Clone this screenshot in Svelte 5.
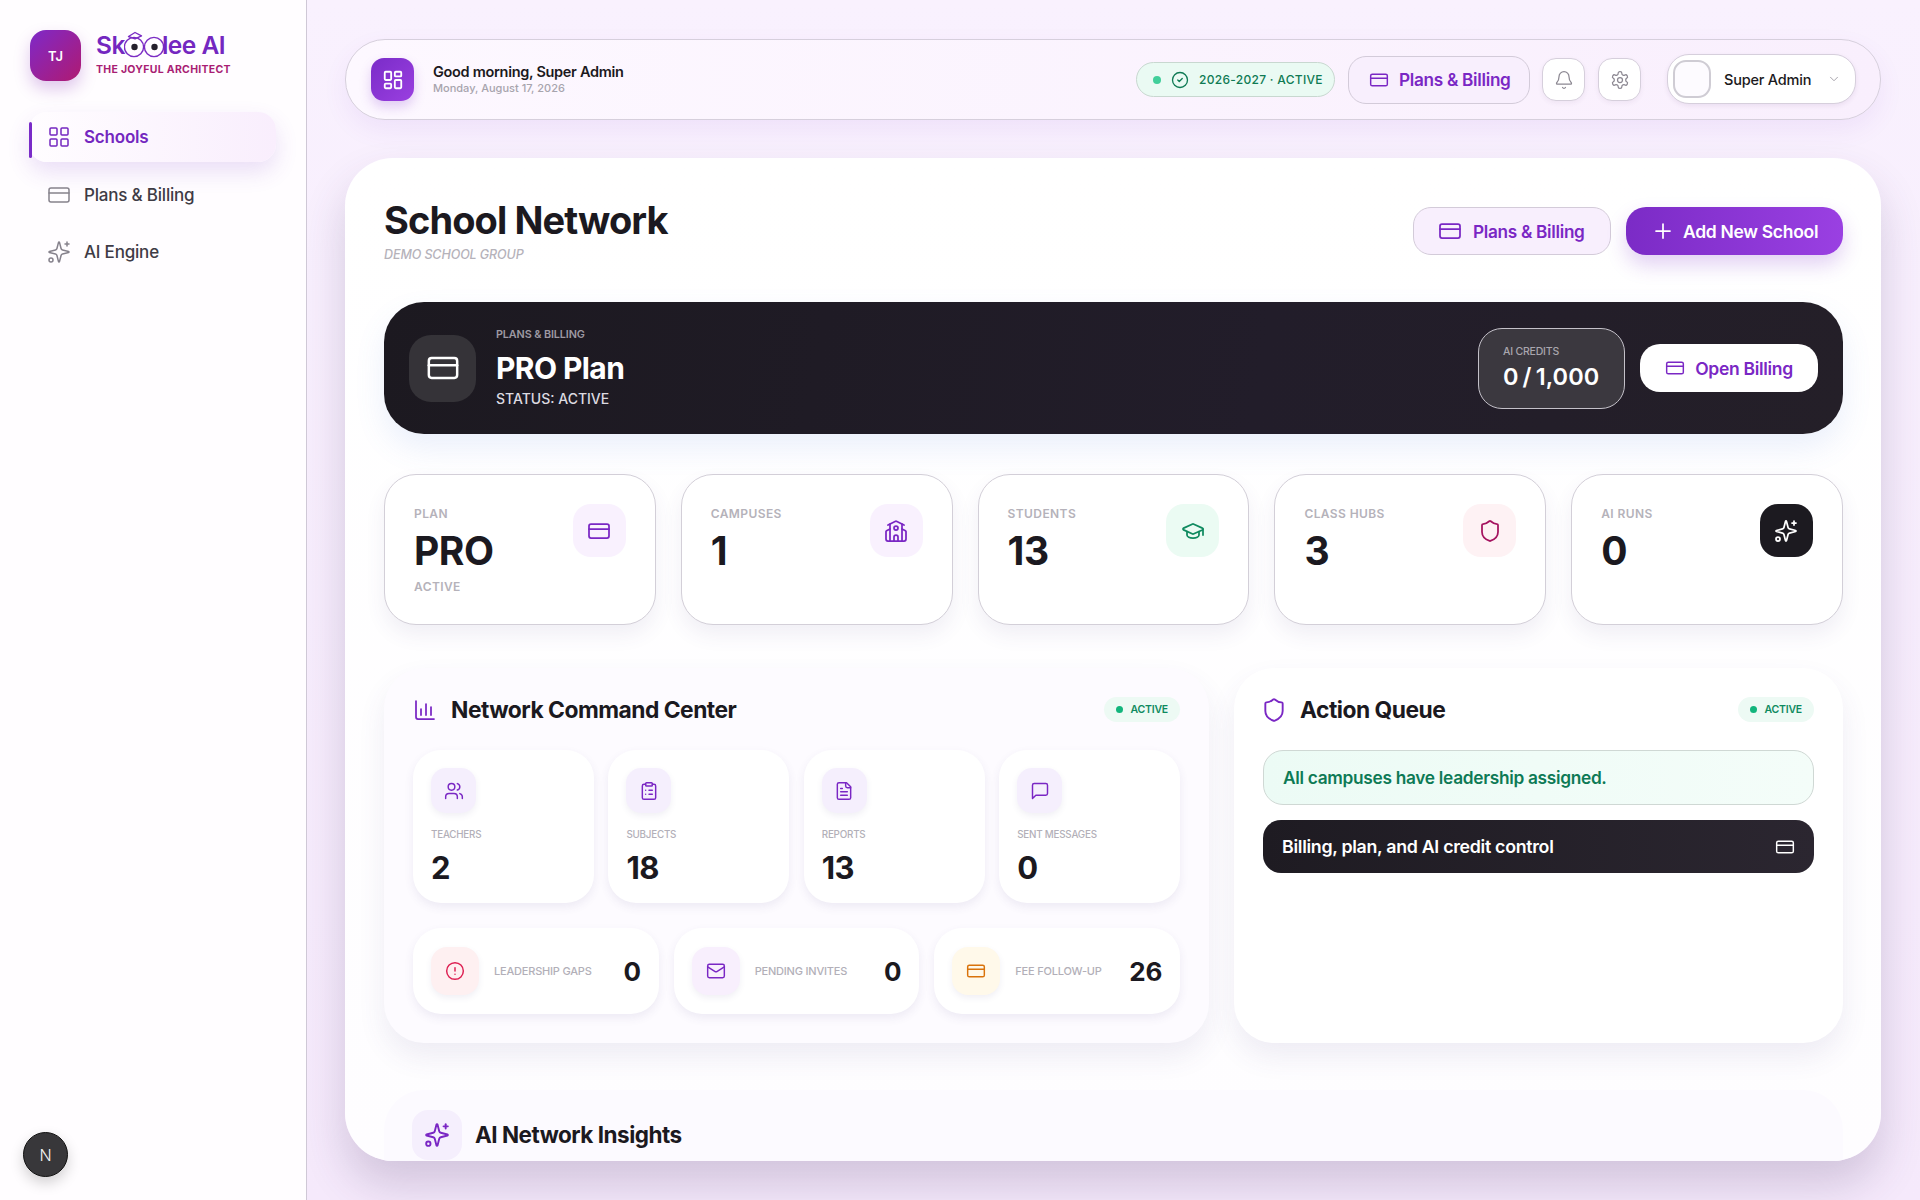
<script>
  const paths = {
    grid: '<rect x="3" y="3" width="7" height="7" rx="1"/><rect x="14" y="3" width="7" height="7" rx="1"/><rect x="14" y="14" width="7" height="7" rx="1"/><rect x="3" y="14" width="7" height="7" rx="1"/>',
    dashboard: '<rect x="3" y="3" width="7" height="9" rx="1"/><rect x="14" y="3" width="7" height="5" rx="1"/><rect x="14" y="12" width="7" height="9" rx="1"/><rect x="3" y="16" width="7" height="5" rx="1"/>',
    card: '<rect x="2" y="5" width="20" height="14" rx="2"/><line x1="2" y1="10" x2="22" y2="10"/>',
    sparkles: '<path d="M9.937 15.5A2 2 0 0 0 8.5 14.063l-6.135-1.582a.5.5 0 0 1 0-.962L8.5 9.936A2 2 0 0 0 9.937 8.5l1.582-6.135a.5.5 0 0 1 .963 0L14.063 8.5A2 2 0 0 0 15.5 9.937l6.135 1.581a.5.5 0 0 1 0 .964L15.5 14.063a2 2 0 0 0-1.437 1.437l-1.582 6.135a.5.5 0 0 1-.963 0z"/><path d="M20 2v4"/><path d="M22 4h-4"/><circle cx="4" cy="20" r="2"/>',
    check: '<circle cx="12" cy="12" r="10"/><path d="m9 12 2 2 4-4"/>',
    bell: '<path d="M10.268 21a2 2 0 0 0 3.464 0"/><path d="M3.262 15.326A1 1 0 0 0 4 17h16a1 1 0 0 0 .74-1.673C19.41 13.956 18 12.499 18 8A6 6 0 0 0 6 8c0 4.499-1.411 5.956-2.738 7.326"/>',
    settings: '<path d="M12.22 2h-.44a2 2 0 0 0-2 2v.18a2 2 0 0 1-1 1.73l-.43.25a2 2 0 0 1-2 0l-.15-.08a2 2 0 0 0-2.73.73l-.22.38a2 2 0 0 0 .73 2.73l.15.1a2 2 0 0 1 1 1.72v.51a2 2 0 0 1-1 1.74l-.15.09a2 2 0 0 0-.73 2.73l.22.38a2 2 0 0 0 2.73.73l.15-.08a2 2 0 0 1 2 0l.43.25a2 2 0 0 1 1 1.73V20a2 2 0 0 0 2 2h.44a2 2 0 0 0 2-2v-.18a2 2 0 0 1 1-1.73l.43-.25a2 2 0 0 1 2 0l.15.08a2 2 0 0 0 2.73-.73l.22-.39a2 2 0 0 0-.73-2.73l-.15-.08a2 2 0 0 1-1-1.74v-.5a2 2 0 0 1 1-1.74l.15-.09a2 2 0 0 0 .73-2.73l-.22-.38a2 2 0 0 0-2.73-.73l-.15.08a2 2 0 0 1-2 0l-.43-.25a2 2 0 0 1-1-1.73V4a2 2 0 0 0-2-2z"/><circle cx="12" cy="12" r="3"/>',
    chevron: '<path d="m6 9 6 6 6-6"/>',
    plus: '<path d="M5 12h14"/><path d="M12 5v14"/>',
    school: '<path d="M14 22v-4a2 2 0 1 0-4 0v4"/><path d="m18 10 3.447 1.724a1 1 0 0 1 .553.894V20a2 2 0 0 1-2 2H4a2 2 0 0 1-2-2v-7.382a1 1 0 0 1 .553-.894L6 10"/><path d="M18 5v17"/><path d="m4 6 7.106-3.553a2 2 0 0 1 1.788 0L20 6"/><path d="M6 5v17"/><circle cx="12" cy="9" r="2"/>',
    cap: '<path d="M21.42 10.922a1 1 0 0 0-.019-1.838L12.83 5.18a2 2 0 0 0-1.66 0L2.6 9.08a1 1 0 0 0 0 1.832l8.57 3.908a2 2 0 0 0 1.66 0z"/><path d="M22 10v6"/><path d="M6 12.5V16a6 3 0 0 0 12 0v-3.5"/>',
    shield: '<path d="M20 13c0 5-3.5 7.5-7.66 8.95a1 1 0 0 1-.67-.01C7.5 20.5 4 18 4 13V6a1 1 0 0 1 1-1c2 0 4.5-1.2 6.24-2.72a1.17 1.17 0 0 1 1.52 0C14.51 3.81 17 5 19 5a1 1 0 0 1 1 1z"/>',
    chart: '<path d="M3 3v16a2 2 0 0 0 2 2h16"/><path d="M8 17v-6"/><path d="M13 17V6"/><path d="M18 17v-8"/>',
    users: '<path d="M16 21v-2a4 4 0 0 0-4-4H6a4 4 0 0 0-4 4v2"/><path d="M16 3.128a4 4 0 0 1 0 7.744"/><path d="M22 21v-2a4 4 0 0 0-3-3.87"/><circle cx="9" cy="7" r="4"/>',
    clipboard: '<rect x="8" y="2" width="8" height="4" rx="1"/><path d="M16 4h2a2 2 0 0 1 2 2v14a2 2 0 0 1-2 2H6a2 2 0 0 1-2-2V6a2 2 0 0 1 2-2h2"/><path d="M12 11h4"/><path d="M12 16h4"/><path d="M8 11h.01"/><path d="M8 16h.01"/>',
    file: '<path d="M15 2H6a2 2 0 0 0-2 2v16a2 2 0 0 0 2 2h12a2 2 0 0 0 2-2V7Z"/><path d="M14 2v4a2 2 0 0 0 2 2h4"/><path d="M10 9H8"/><path d="M16 13H8"/><path d="M16 17H8"/>',
    message: '<path d="M21 15a2 2 0 0 1-2 2H7l-4 4V5a2 2 0 0 1 2-2h14a2 2 0 0 1 2 2z"/>',
    alert: '<circle cx="12" cy="12" r="10"/><line x1="12" y1="8" x2="12" y2="12"/><line x1="12" y1="16" x2="12.01" y2="16"/>',
    mail: '<rect x="2" y="4" width="20" height="16" rx="2"/><path d="m22 7-8.97 5.7a1.94 1.94 0 0 1-2.06 0L2 7"/>'
  };

  const nav = [
    { label: 'Schools', icon: 'grid', active: true },
    { label: 'Plans & Billing', icon: 'card' },
    { label: 'AI Engine', icon: 'sparkles' }
  ];

  const stats = [
    { label: 'PLAN', value: 'PRO', sub: 'ACTIVE', icon: 'card', tone: 'purple' },
    { label: 'CAMPUSES', value: '1', icon: 'school', tone: 'purple' },
    { label: 'STUDENTS', value: '13', icon: 'cap', tone: 'green' },
    { label: 'CLASS HUBS', value: '3', icon: 'shield', tone: 'rose' },
    { label: 'AI RUNS', value: '0', icon: 'sparkles', tone: 'dark' }
  ];

  const tiles = [
    { label: 'TEACHERS', value: '2', icon: 'users' },
    { label: 'SUBJECTS', value: '18', icon: 'clipboard' },
    { label: 'REPORTS', value: '13', icon: 'file' },
    { label: 'SENT MESSAGES', value: '0', icon: 'message' }
  ];

  const followups = [
    { label: 'LEADERSHIP GAPS', value: '0', icon: 'alert', tone: 'red' },
    { label: 'PENDING INVITES', value: '0', icon: 'mail', tone: 'purple' },
    { label: 'FEE FOLLOW-UP', value: '26', icon: 'card', tone: 'amber' }
  ];
</script>

{#snippet icon(name, size = 20, width = 1.75)}
  <svg class="ico" viewBox="0 0 24 24" width={size} height={size} fill="none" stroke="currentColor" stroke-width={width} stroke-linecap="round" stroke-linejoin="round" aria-hidden="true">
    {@html paths[name]}
  </svg>
{/snippet}

{#snippet activeBadge()}
  <span class="badge"><i></i>ACTIVE</span>
{/snippet}

<div class="shell">
  <aside class="sidebar">
    <div class="brand">
      <div class="brand-mark">TJ</div>
      <div class="brand-text">
        <div class="wordmark">
          <span>Sk</span>
          <svg class="eyes" viewBox="0 0 40 28" width="40" height="28" aria-hidden="true">
            <g fill="none" stroke="#7b2cc4" stroke-width="1.4">
              <circle cx="10" cy="17" r="9.6" />
              <circle cx="30" cy="17" r="9.6" />
              <path d="M4.5 6.5 11 2.5l6.5 3.4-6.5 3z" stroke-linejoin="round" />
            </g>
            <circle cx="10.5" cy="17" r="3.2" fill="#241f2b" />
            <circle cx="30.5" cy="17" r="3.2" fill="#241f2b" />
          </svg>
          <span>lee AI</span>
        </div>
        <div class="tagline">THE JOYFUL ARCHITECT</div>
      </div>
    </div>

    <nav class="nav">
      {#each nav as item}
        <div class="nav-item" class:active={item.active}>
          {@render icon(item.icon, 24, 1.5)}
          <span>{item.label}</span>
        </div>
      {/each}
    </nav>

    <div class="dev-badge">N</div>
  </aside>

  <main class="main">
    <header class="topbar">
      <div class="top-icon">{@render icon('dashboard', 22, 2)}</div>
      <div class="greeting">
        <div class="hello">Good morning, Super Admin</div>
        <div class="date">Monday, August 17, 2026</div>
      </div>
      <div class="top-actions">
        <div class="year-pill"><i></i>{@render icon('check', 18, 1.75)}<span>2026-2027 · ACTIVE</span></div>
        <button class="soft-btn top-billing">{@render icon('card', 20, 1.75)}Plans &amp; Billing</button>
        <button class="round-btn">{@render icon('bell', 20, 1.5)}</button>
        <button class="round-btn">{@render icon('settings', 20, 1.5)}</button>
        <div class="user">
          <div class="user-avatar"></div>
          <span>Super Admin</span>
          {@render icon('chevron', 14, 1.5)}
        </div>
      </div>
    </header>

    <section class="board">
      <div class="board-head">
        <div>
          <h1>School Network</h1>
          <div class="group">DEMO SCHOOL GROUP</div>
        </div>
        <div class="board-actions">
          <button class="soft-btn">{@render icon('card', 24, 1.75)}Plans &amp; Billing</button>
          <button class="primary-btn">{@render icon('plus', 24, 1.75)}Add New School</button>
        </div>
      </div>

      <div class="hero">
        <div class="hero-icon">{@render icon('card', 34, 1.75)}</div>
        <div class="hero-text">
          <div class="hero-label">PLANS &amp; BILLING</div>
          <div class="hero-title">PRO Plan</div>
          <div class="hero-status">STATUS: ACTIVE</div>
        </div>
        <div class="credits">
          <div class="credits-label">AI CREDITS</div>
          <div class="credits-value">0 / 1,000</div>
        </div>
        <button class="open-billing">{@render icon('card', 20, 1.75)}Open Billing</button>
      </div>

      <div class="stats">
        {#each stats as s}
          <div class="stat">
            <div>
              <div class="stat-label">{s.label}</div>
              <div class="stat-value">{s.value}</div>
              {#if s.sub}<div class="stat-sub">{s.sub}</div>{/if}
            </div>
            <div class="stat-icon {s.tone}">{@render icon(s.icon, 24, 1.75)}</div>
          </div>
        {/each}
      </div>

      <div class="panels">
        <div class="panel tinted">
          <div class="panel-head">
            <span class="panel-icon">{@render icon('chart', 24, 1.75)}</span>
            <h2>Network Command Center</h2>
            {@render activeBadge()}
          </div>
          <div class="tiles">
            {#each tiles as t}
              <div class="tile">
                <div class="tile-icon">{@render icon(t.icon, 20, 1.75)}</div>
                <div class="tile-label">{t.label}</div>
                <div class="tile-value">{t.value}</div>
              </div>
            {/each}
          </div>
          <div class="followups">
            {#each followups as f}
              <div class="followup">
                <div class="followup-icon {f.tone}">{@render icon(f.icon, 20, 1.75)}</div>
                <div class="followup-label">{f.label}</div>
                <div class="followup-value">{f.value}</div>
              </div>
            {/each}
          </div>
        </div>

        <div class="panel">
          <div class="panel-head">
            <span class="panel-icon tall">{@render icon('shield', 26, 1.75)}</span>
            <h2>Action Queue</h2>
            {@render activeBadge()}
          </div>
          <div class="queue-ok">All campuses have leadership assigned.</div>
          <div class="queue-dark">
            <span>Billing, plan, and AI credit control</span>
            {@render icon('card', 20, 1.75)}
          </div>
        </div>
      </div>

      <div class="insights">
        <div class="insights-icon">{@render icon('sparkles', 26, 1.75)}</div>
        <h2>AI Network Insights</h2>
      </div>
    </section>
  </main>
</div>

<style>
  :global(body) {
    margin: 0;
    background: #f6eafc;
  }

  .shell {
    display: flex;
    height: 1200px;
    overflow: hidden;
    font-family: Inter, "Liberation Sans", sans-serif;
    color: #1b1920;
    background: linear-gradient(180deg, #f9f1fe 0%, #f5e9fb 100%);
  }

  button {
    font-family: inherit;
    cursor: pointer;
  }

  .ico {
    flex: none;
    display: block;
  }

  /* Sidebar */
  .sidebar {
    position: relative;
    box-sizing: border-box;
    width: 307px;
    flex: none;
    padding: 30px 30px 0 29px;
    background: #fffdff;
    border-right: 1px solid #cfc8d6;
  }

  .brand {
    display: flex;
    align-items: center;
    gap: 15px;
    margin-left: 1px;
  }

  .brand-mark {
    width: 51px;
    height: 51px;
    flex: none;
    display: grid;
    place-items: center;
    border-radius: 16px;
    background: linear-gradient(135deg, #7e29c9, #b01a71);
    box-shadow: 0 8px 16px rgba(126, 41, 180, 0.25);
    color: #fff;
    font-size: 13px;
    font-weight: 600;
  }

  .brand-text {
    margin-top: -6px;
  }

  .wordmark {
    display: flex;
    align-items: flex-end;
    height: 28px;
    font-size: 24.5px;
    line-height: 26px;
    font-weight: 600;
    letter-spacing: -0.5px;
    color: #7427c0;
  }

  .eyes {
    margin: 0 -2px 0 -1px;
  }

  .tagline {
    margin-top: 5px;
    font-size: 10.5px;
    font-weight: 700;
    letter-spacing: 0.3px;
    color: #a91e74;
  }

  .nav {
    display: flex;
    flex-direction: column;
    gap: 7.5px;
    margin-top: 31px;
  }

  .nav-item {
    position: relative;
    display: flex;
    align-items: center;
    gap: 13px;
    height: 50px;
    padding-left: 18px;
    font-size: 17px;
    font-weight: 500;
    letter-spacing: -0.2px;
    color: #3e3b45;
  }

  .nav-item .ico {
    color: #86828c;
  }

  .nav-item.active {
    border-radius: 18px;
    background: linear-gradient(90deg, #fffdff, #f9eefd);
    box-shadow: 0 10px 22px rgba(126, 60, 200, 0.16);
    color: #7427c0;
    font-weight: 600;
  }

  .nav-item.active .ico {
    color: #7427c0;
  }

  .nav-item.active::before {
    content: "";
    position: absolute;
    left: 0;
    top: 10px;
    bottom: 4px;
    width: 3px;
    border-radius: 2px;
    background: #7a2cc8;
  }

  .dev-badge {
    position: absolute;
    left: 23px;
    bottom: 23px;
    width: 45px;
    height: 45px;
    display: grid;
    place-items: center;
    border-radius: 50%;
    background: #38373a;
    border: 1px solid #111;
    box-sizing: border-box;
    box-shadow: 0 6px 14px rgba(0, 0, 0, 0.18);
    color: #f4f4f4;
    font-size: 16px;
    font-weight: 300;
  }

  /* Main column */
  .main {
    flex: 1;
    min-width: 0;
    display: flex;
    flex-direction: column;
    gap: 38px;
    padding: 39px 39px 39px 38px;
  }

  .topbar {
    display: flex;
    align-items: center;
    box-sizing: border-box;
    height: 81px;
    padding: 0 24px 0 25px;
    flex: none;
    border: 1px solid #d6cfdc;
    border-radius: 40px;
    background: linear-gradient(90deg, #fdf8ff, #f9effd);
    box-shadow: 0 10px 24px rgba(126, 60, 200, 0.08);
  }

  .top-icon {
    width: 43px;
    height: 43px;
    display: grid;
    place-items: center;
    border-radius: 13px;
    background: linear-gradient(135deg, #7a2cc8, #9a3fe0);
    box-shadow: 0 6px 12px rgba(122, 44, 200, 0.22);
    color: #fff;
  }

  .greeting {
    margin-left: 19px;
  }

  .hello {
    font-size: 14.5px;
    line-height: 18px;
    font-weight: 600;
    letter-spacing: -0.3px;
  }

  .date {
    font-size: 11px;
    line-height: 15px;
    font-weight: 500;
    color: #a7a4ad;
  }

  .top-actions {
    display: flex;
    align-items: center;
    margin-left: auto;
    gap: 13px;
  }

  .year-pill {
    display: flex;
    align-items: center;
    gap: 10px;
    box-sizing: border-box;
    width: 199px;
    height: 35px;
    padding-left: 16px;
    border: 1px solid #c8d8d0;
    border-radius: 18px;
    background: #eafaf3;
    color: #0f7a54;
    font-size: 12px;
    font-weight: 500;
    letter-spacing: 0.3px;
    white-space: nowrap;
  }

  .year-pill i {
    width: 8px;
    height: 8px;
    border-radius: 50%;
    background: #41cf9a;
  }

  .soft-btn {
    display: flex;
    align-items: center;
    gap: 10px;
    box-sizing: border-box;
    height: 48px;
    padding: 0 20px;
    border: 1px solid #d3cbd9;
    border-radius: 18px;
    background: #f8effd;
    color: #7a27c4;
    font-size: 17.2px;
    font-weight: 600;
    letter-spacing: -0.3px;
    white-space: nowrap;
  }

  .top-billing {
    width: 182px;
    margin-right: -1px;
  }

  .board-actions .soft-btn {
    width: 198px;
    padding: 0 24px;
    gap: 11px;
  }

  .round-btn {
    width: 43px;
    height: 43px;
    display: grid;
    place-items: center;
    padding: 0;
    border: 1px solid #d6cfdc;
    border-radius: 14px;
    background: #fff;
    color: #8c8892;
    box-shadow: 0 2px 5px rgba(60, 30, 90, 0.06);
  }

  .user {
    display: flex;
    align-items: center;
    box-sizing: border-box;
    width: 189px;
    height: 50px;
    margin: -1px 0 0 13px;
    padding: 0 14px 0 5px;
    border: 1px solid #d6cfdc;
    border-radius: 22px;
    background: #fff;
    box-shadow: 0 2px 5px rgba(60, 30, 90, 0.08);
    font-size: 14.5px;
    font-weight: 500;
    letter-spacing: -0.2px;
  }

  .user span {
    margin-left: 13px;
    flex: 1;
  }

  .user .ico {
    color: #9a97a0;
  }

  .user-avatar {
    box-sizing: border-box;
    width: 38px;
    height: 38px;
    border: 2px solid #cfccd4;
    border-radius: 13px;
    background: #fdfbff;
  }

  /* Board */
  .board {
    flex: 1;
    min-height: 0;
    overflow: hidden;
    box-sizing: border-box;
    padding: 49px 38px 0 39px;
    border-radius: 48px;
    background: linear-gradient(180deg, #fff, #fefdff);
    box-shadow: 0 24px 44px rgba(70, 50, 100, 0.2);
  }

  .board-head {
    display: flex;
    justify-content: space-between;
    align-items: flex-start;
    height: 95px;
  }

  h1 {
    margin: -12px 0 0;
    font-size: 38px;
    line-height: 50px;
    font-weight: 700;
    letter-spacing: -0.9px;
  }

  .group {
    margin-top: 2px;
    font-size: 12.5px;
    font-style: italic;
    font-weight: 500;
    letter-spacing: -0.1px;
    color: #b5b2ba;
  }

  .board-actions {
    display: flex;
    gap: 15px;
  }

  .primary-btn {
    display: flex;
    align-items: center;
    gap: 8px;
    box-sizing: border-box;
    width: 217px;
    height: 48px;
    padding: 0 0 0 25px;
    border: none;
    border-radius: 20px;
    background: linear-gradient(90deg, #7b2bc6, #9a40e2);
    box-shadow: 0 10px 20px rgba(122, 44, 200, 0.22);
    color: #fff;
    font-size: 17.5px;
    font-weight: 600;
    letter-spacing: -0.3px;
    white-space: nowrap;
  }

  .hero {
    display: flex;
    align-items: center;
    box-sizing: border-box;
    height: 132px;
    padding: 0 25px;
    border-radius: 40px;
    background: linear-gradient(100deg, #1c1920, #221d2a 60%, #241f28);
    box-shadow: 0 14px 30px rgba(90, 130, 220, 0.12);
    color: #fff;
  }

  .hero-icon {
    width: 67px;
    height: 67px;
    display: grid;
    place-items: center;
    border-radius: 22px;
    background: #353338;
  }

  .hero-text {
    flex: 1;
    margin: -1px 0 0 20px;
  }

  .hero-label {
    font-size: 10.8px;
    line-height: 14px;
    font-weight: 600;
    letter-spacing: -0.1px;
    color: #9d99a2;
  }

  .hero-title {
    margin-top: 8px;
    font-size: 30px;
    line-height: 36px;
    font-weight: 700;
    letter-spacing: -0.6px;
  }

  .hero-status {
    margin-top: 4px;
    font-size: 14px;
    line-height: 18px;
    font-weight: 500;
    color: #dcdae0;
  }

  .credits {
    box-sizing: border-box;
    width: 147px;
    height: 81px;
    padding: 16px 0 0 24px;
    border: 1px solid #c4c1c9;
    border-radius: 24px;
    background: #3b383f;
  }

  .credits-label {
    font-size: 10.5px;
    line-height: 14px;
    font-weight: 500;
    letter-spacing: -0.2px;
    color: #a9a6ae;
  }

  .credits-value {
    margin-top: 3px;
    font-size: 23.5px;
    line-height: 30px;
    font-weight: 600;
    word-spacing: -2px;
    letter-spacing: 0.1px;
    white-space: nowrap;
  }

  .open-billing {
    display: flex;
    align-items: center;
    justify-content: center;
    gap: 10px;
    box-sizing: border-box;
    width: 178px;
    height: 48px;
    margin-left: 15px;
    border: none;
    border-radius: 20px;
    background: #fff;
    color: #7a27c4;
    font-size: 17.5px;
    font-weight: 600;
    letter-spacing: -0.3px;
    white-space: nowrap;
  }

  .stats {
    display: grid;
    grid-template-columns: repeat(5, 1fr);
    gap: 25px;
    margin-top: 40px;
  }

  .stat {
    display: flex;
    justify-content: space-between;
    align-items: flex-start;
    box-sizing: border-box;
    height: 151px;
    padding: 30px 29px;
    border: 1px solid #d3cfd8;
    border-radius: 32px;
    background: #fff;
    box-shadow: 0 10px 20px rgba(80, 70, 130, 0.08);
  }

  .stat-label {
    margin-top: 1px;
    font-size: 12px;
    line-height: 16px;
    font-weight: 600;
    letter-spacing: 0.4px;
    color: #b5b2ba;
  }

  .stat-value {
    margin-top: 7px;
    font-size: 39px;
    line-height: 44px;
    font-weight: 700;
    letter-spacing: -0.5px;
  }

  .stat-sub {
    margin-top: 6px;
    font-size: 12px;
    line-height: 16px;
    font-weight: 600;
    letter-spacing: 0.4px;
    color: #b5b2ba;
  }

  .stat-icon {
    width: 53px;
    height: 53px;
    margin-top: -1px;
    display: grid;
    place-items: center;
    border-radius: 18px;
  }

  .stat-icon.purple {
    background: #f9f1fe;
    color: #7a27c4;
  }

  .stat-icon.green {
    background: #ebfbf3;
    color: #0f8a5f;
  }

  .stat-icon.rose {
    background: #fef2f4;
    color: #a5135f;
  }

  .stat-icon.dark {
    background: #1c1a20;
    color: #fff;
  }

  .panels {
    display: grid;
    grid-template-columns: 825fr 609fr;
    gap: 25px;
    margin-top: 43px;
  }

  .panel {
    box-sizing: border-box;
    height: 375px;
    padding: 29px;
    border-radius: 40px;
    background: #fff;
    box-shadow: 0 14px 28px rgba(80, 70, 130, 0.09);
  }

  .panel.tinted {
    background: #fdfbff;
  }

  .panel-head {
    display: flex;
    align-items: center;
    height: 25px;
    margin-bottom: 28px;
  }

  .panel-icon {
    color: #7a27c4;
    margin-right: 1px;
  }

  .panel-icon.tall {
    margin: 0 0 0 -2px;
  }

  h2 {
    margin: 0;
    font-size: 22.8px;
    font-weight: 700;
    letter-spacing: -0.5px;
  }

  .panel-head h2 {
    flex: 1;
    margin-left: 13px;
  }

  .badge {
    display: flex;
    align-items: center;
    gap: 7px;
    box-sizing: border-box;
    height: 25px;
    padding: 0 12px;
    border-radius: 13px;
    background: #edfaf4;
    color: #0f8a5f;
    font-size: 10.5px;
    font-weight: 600;
    letter-spacing: -0.2px;
  }

  .badge i {
    width: 7px;
    height: 7px;
    border-radius: 50%;
    background: #12b57c;
  }

  .tiles {
    display: grid;
    grid-template-columns: repeat(4, 1fr);
    gap: 14.5px;
  }

  .tile {
    box-sizing: border-box;
    height: 153px;
    padding: 18px 18px 0;
    border-radius: 28px;
    background: #fff;
    box-shadow: 0 4px 10px rgba(80, 70, 130, 0.09);
  }

  .tile-icon {
    width: 45px;
    height: 45px;
    display: grid;
    place-items: center;
    border-radius: 15px;
    background: #f5effd;
    box-shadow: 0 3px 6px rgba(80, 70, 130, 0.08);
    color: #7a27c4;
  }

  .tile-label {
    margin-top: 16px;
    font-size: 9.8px;
    line-height: 12px;
    font-weight: 500;
    letter-spacing: -0.2px;
    color: #b2afb8;
  }

  .tile-value {
    margin-top: 9px;
    font-size: 31px;
    line-height: 36px;
    font-weight: 700;
    letter-spacing: -0.6px;
  }

  .followups {
    display: grid;
    grid-template-columns: repeat(3, 1fr);
    gap: 15px;
    margin-top: 25px;
  }

  .followup {
    display: flex;
    align-items: center;
    box-sizing: border-box;
    height: 86px;
    padding: 0 18px;
    border-radius: 28px;
    background: #fff;
    box-shadow: 0 4px 10px rgba(80, 70, 130, 0.09);
  }

  .followup-icon {
    width: 48px;
    height: 48px;
    flex: none;
    display: grid;
    place-items: center;
    border-radius: 16px;
    box-shadow: 0 3px 6px rgba(80, 70, 130, 0.08);
  }

  .followup-icon.red {
    background: #fef0f1;
    color: #dd1f52;
  }

  .followup-icon.purple {
    background: #f8effd;
    color: #7a27c4;
  }

  .followup-icon.amber {
    background: #fff9ea;
    color: #d9730b;
  }

  .followup-label {
    flex: 1;
    margin-left: 15px;
    font-size: 11px;
    font-weight: 500;
    letter-spacing: -0.2px;
    color: #b2afb8;
    white-space: nowrap;
  }

  .followup-value {
    font-size: 26px;
    font-weight: 700;
    letter-spacing: -0.3px;
  }

  .queue-ok {
    box-sizing: border-box;
    height: 55px;
    padding: 0 19px;
    display: flex;
    align-items: center;
    border: 1px solid #cfd8d4;
    border-radius: 20px;
    background: linear-gradient(90deg, #ecfbf5, #f4fdf9);
    color: #0d7a55;
    font-size: 17.3px;
    font-weight: 600;
    letter-spacing: -0.3px;
  }

  .queue-dark {
    display: flex;
    justify-content: space-between;
    align-items: center;
    box-sizing: border-box;
    height: 53px;
    margin-top: 15px;
    padding: 0 19px;
    border-radius: 18px;
    background: linear-gradient(90deg, #1e1b22, #2b2630);
    color: #fff;
    font-size: 17.8px;
    font-weight: 600;
    letter-spacing: -0.3px;
  }

  .insights {
    display: flex;
    align-items: flex-start;
    gap: 13px;
    height: 120px;
    margin-top: 47px;
    padding: 20px 28px 0;
    box-sizing: border-box;
    border-radius: 40px;
    background: #fcfaff;
  }

  .insights h2 {
    font-size: 22.5px;
    line-height: 50px;
  }

  .insights-icon {
    width: 50px;
    height: 50px;
    display: grid;
    place-items: center;
    border-radius: 16px;
    background: #f5effd;
    color: #7a27c4;
  }
</style>
